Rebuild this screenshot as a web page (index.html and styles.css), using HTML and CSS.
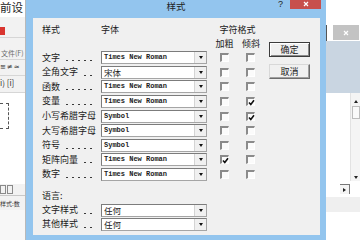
FILE: index.html
```html
<!DOCTYPE html>
<html lang="zh-CN">
   <head>
      <meta charset="UTF-8" />
      <title>样式</title>
      <link rel="stylesheet" href="styles.css">
   </head>
   <body>
      <div class="screen">
         <div class="bg-left">
            <div class="bl-title">前设</div>
            <div class="bl-tool"><span class="red-icon"></span></div>
            <div class="bl-menu">文件(F)</div>
            <div class="bl-sym">≅≠≈</div>
            <div class="bl-sym2">i) [i]</div>
            <div class="bl-doc"><div class="dash-box"></div></div>
            <div class="bl-btns"><span></span><span></span></div>
            <div class="bl-status">样式:数</div>
            <div class="bl-foot"></div>
         </div>

         <div class="dialog">
            <div class="titlebar">
               <span class="title">样式</span>
               <div class="controls">
                  <span class="help">?</span>
                  <span class="close"><svg viewBox="0 0 6 6"><path d="M1 1 L5 5 M5 1 L1 5" /></svg></span>
               </div>
            </div>
            <div class="client">
               <div class="form">
                  <div class="grid">
                     <div class="head">样式</div>
                     <div class="head">字体</div>
                     <div class="head span2">字符格式</div>
                     <div></div>
                     <div></div>
                     <div class="head center">加粗</div>
                     <div class="head">倾斜</div>

                     <div class="label">文字<span class="leader"></span></div>
                     <div class="select"><span class="value mono">Times New Roman</span><span class="arrow"></span></div>
                     <div class="cb bold-col"></div>
                     <div class="cb italic-col"></div>

                     <div class="label">全角文字<span class="leader"></span></div>
                     <div class="select"><span class="value">宋体</span><span class="arrow"></span></div>
                     <div class="cb bold-col"></div>
                     <div class="cb italic-col"></div>

                     <div class="label">函数<span class="leader"></span></div>
                     <div class="select"><span class="value mono">Times New Roman</span><span class="arrow"></span></div>
                     <div class="cb bold-col"></div>
                     <div class="cb italic-col"></div>

                     <div class="label">变量<span class="leader"></span></div>
                     <div class="select"><span class="value mono">Times New Roman</span><span class="arrow"></span></div>
                     <div class="cb bold-col"></div>
                     <div class="cb italic-col checked"><svg viewBox="0 0 7 7"><path d="M1 3.5 L2.8 5.5 L6 1.2" /></svg></div>

                     <div class="label">小写希腊字母<span class="leader"></span></div>
                     <div class="select"><span class="value mono">Symbol</span><span class="arrow"></span></div>
                     <div class="cb bold-col"></div>
                     <div class="cb italic-col checked"><svg viewBox="0 0 7 7"><path d="M1 3.5 L2.8 5.5 L6 1.2" /></svg></div>

                     <div class="label">大写希腊字母<span class="leader"></span></div>
                     <div class="select"><span class="value mono">Symbol</span><span class="arrow"></span></div>
                     <div class="cb bold-col"></div>
                     <div class="cb italic-col"></div>

                     <div class="label">符号<span class="leader"></span></div>
                     <div class="select"><span class="value mono">Symbol</span><span class="arrow"></span></div>
                     <div class="cb bold-col"></div>
                     <div class="cb italic-col"></div>

                     <div class="label">矩阵向量<span class="leader"></span></div>
                     <div class="select"><span class="value mono">Times New Roman</span><span class="arrow"></span></div>
                     <div class="cb bold-col checked"><svg viewBox="0 0 7 7"><path d="M1 3.5 L2.8 5.5 L6 1.2" /></svg></div>
                     <div class="cb italic-col"></div>

                     <div class="label">数字<span class="leader"></span></div>
                     <div class="select"><span class="value mono">Times New Roman</span><span class="arrow"></span></div>
                     <div class="cb bold-col"></div>
                     <div class="cb italic-col"></div>
                  </div>

                  <div class="lang">
                     <div class="head">语言:</div>
                     <div></div>
                     <div class="label">文字样式<span class="leader"></span></div>
                     <div class="select"><span class="value">任何</span><span class="arrow"></span></div>
                     <div class="label">其他样式<span class="leader"></span></div>
                     <div class="select"><span class="value">任何</span><span class="arrow"></span></div>
                  </div>
               </div>

               <div class="actions">
                  <button class="btn default">确定</button>
                  <button class="btn">取消</button>
               </div>
            </div>
         </div>

         <div class="bg-right">
            <div class="br-top"></div>
            <div class="br-tabrow"><span class="br-tab"><svg viewBox="0 0 6 6"><path d="M1 1 L5 5 M5 1 L1 5" /></svg></span></div>
            <div class="br-band"></div>
            <div class="br-view">
               <div class="br-page"></div>
               <div class="vscroll">
                  <span class="sb-up"></span>
                  <span class="sb-thumb"></span>
                  <span class="sb-fill"></span>
                  <span class="sb-down"></span>
               </div>
            </div>
            <div class="br-hscroll"><span class="sb-left"></span></div>
            <div class="br-status"></div>
            <div class="br-foot"></div>
         </div>
      </div>
   </body>
</html>
```

FILE: styles.css
```css
body {
margin: 0;
padding: 0;
background-color: #ffffff;
font-family: "Noto Sans CJK SC", "Noto Sans", sans-serif;
color: #1a1a1a;
overflow: hidden;
}
.screen {
width: 360px;
height: 240px;
display: flex;
overflow: hidden;
}

/* left background window */
.bg-left {
width: 25px;
border-right: 1px solid #b9b9b9;
display: flex;
flex-direction: column;
overflow: hidden;
background-color: #ffffff;
}
.bl-title {
height: 17px;
font-size: 11.5px;
line-height: 14px;
white-space: nowrap;
color: #222;
}
.bl-tool {
height: 20px;
background-color: #f2f2f2;
border-bottom: 1px solid #d6d6d6;
}
.red-icon {
display: block;
width: 5px;
height: 8px;
margin-top: 10px;
background-color: #d9352f;
}
.bl-menu {
height: 22px;
background-color: #f2f2f2;
border-bottom: 1px solid #d6d6d6;
font-size: 7px;
line-height: 8px;
padding: 11px 0 0 1px;
box-sizing: border-box;
color: #6d6d6d;
white-space: nowrap;
}
.bl-sym {
height: 15px;
background-color: #f2f2f2;
border-bottom: 1px solid #d6d6d6;
font-family: "DejaVu Sans", sans-serif;
font-size: 7px;
line-height: 14px;
letter-spacing: 1px;
white-space: nowrap;
color: #333;
}
.bl-sym2 {
height: 16px;
background-color: #f2f2f2;
border-bottom: 1px solid #d6d6d6;
font-size: 8px;
line-height: 14px;
white-space: nowrap;
color: #333;
}
.bl-doc {
flex: 1;
background-color: #ffffff;
}
.dash-box {
width: 8px;
height: 24px;
margin-top: 10px;
border: 1px dashed #555;
border-left: none;
}
.bl-btns {
height: 12px;
display: flex;
gap: 1px;
background-color: #f2f2f2;
border-bottom: 1px solid #c8c8c8;
padding-top: 1px;
box-sizing: border-box;
}
.bl-btns span {
width: 6px;
height: 9px;
border: 1px solid #8a8a8a;
box-sizing: border-box;
}
.bl-status {
height: 14px;
background-color: #f2f2f2;
font-size: 6px;
line-height: 12px;
white-space: nowrap;
color: #333;
padding-top: 2px;
box-sizing: border-box;
}
.bl-foot {
height: 30px;
background-color: #f7f7f7;
}

/* dialog */
.dialog {
width: 300px;
flex: none;
background-color: #93c5ee;
display: flex;
flex-direction: column;
}
.titlebar {
height: 18px;
display: grid;
grid-template-columns: 1fr;
}
.title {
grid-area: 1 / 1;
justify-self: center;
font-size: 9.5px;
line-height: 13px;
color: #1e1e1e;
}
.controls {
grid-area: 1 / 1;
justify-self: end;
align-self: start;
display: flex;
align-items: flex-start;
gap: 7px;
margin-right: 5px;
}
.help {
font-family: "Liberation Sans", Arial, sans-serif;
font-size: 9px;
line-height: 9px;
color: #222;
}
.close {
width: 31px;
height: 9px;
background-color: #c7504c;
display: flex;
justify-content: center;
align-items: flex-start;
padding-top: 1px;
box-sizing: border-box;
}
.close svg, .br-tab svg {
width: 6px;
height: 6px;
}
.close svg path, .br-tab svg path {
stroke: #ffffff;
stroke-width: 1.2;
}
.client {
flex: 1;
margin: 0 6px 5px 7px;
background-color: #f0f0f0;
display: flex;
padding: 6px 0 0 9px;
box-sizing: border-box;
}
.form {
width: 226px;
}
.grid {
display: grid;
grid-template-columns: 59px 106px 35px 26px;
grid-template-rows: 12px 12px repeat(9, 13px);
row-gap: 1.6px;
align-items: center;
}
.head {
font-size: 9px;
line-height: 12px;
white-space: nowrap;
}
.span2 {
grid-column: span 2;
justify-self: center;
}
.center {
justify-self: center;
}
.label {
display: flex;
align-items: center;
font-size: 9px;
line-height: 12px;
white-space: nowrap;
}
.leader {
flex: 1;
min-width: 0;
height: 3px;
margin: 6px 5px 0 4px;
background-image: radial-gradient(circle, #3a3a3a 0.6px, transparent 0.9px);
background-size: 6px 3px;
background-repeat: repeat-x;
}
.select {
height: 13px;
display: flex;
align-items: stretch;
background-color: #ffffff;
border: 1px solid #a5a5a5;
border-top-color: #7c7c7c;
border-left-color: #7c7c7c;
box-sizing: border-box;
}
.value {
flex: 1;
padding-left: 2px;
font-size: 8.5px;
line-height: 11px;
white-space: nowrap;
overflow: hidden;
}
.value.mono {
font-family: "Liberation Mono", "Courier New", monospace;
font-size: 7px;
font-weight: bold;
color: #222;
}
.arrow {
width: 11px;
background-color: #f0f0f0;
border-left: 1px solid #d4d4d4;
display: flex;
align-items: center;
justify-content: center;
}
.arrow::after {
content: "";
width: 0;
height: 0;
border-left: 2.5px solid transparent;
border-right: 2.5px solid transparent;
border-top: 3px solid #111;
}
.cb {
width: 9px;
height: 9px;
box-sizing: border-box;
border-top: 2px solid #8b8b8b;
border-left: 2px solid #8b8b8b;
border-right: 1px solid #ffffff;
border-bottom: 1px solid #ffffff;
background-color: #fbfbfb;
}
.bold-col {
justify-self: start;
margin-left: 13px;
}
.italic-col {
justify-self: start;
margin-left: 4px;
}
.cb svg {
display: block;
width: 7px;
height: 7px;
}
.cb svg path {
fill: none;
stroke: #111;
stroke-width: 1.6;
}
.lang {
display: grid;
grid-template-columns: 59px 106px;
grid-template-rows: 14px 13px 13px;
row-gap: 1px;
align-items: center;
margin-top: 8px;
}
.actions {
display: flex;
flex-direction: column;
gap: 7px;
margin: 18px 0 0 1px;
}
.btn {
width: 41px;
height: 15px;
padding: 0;
font-family: "Noto Sans CJK SC", sans-serif;
font-size: 9px;
line-height: 12px;
color: #1a1a1a;
background-color: #f0f0f0;
border: 1px solid #6c6c6c;
border-top-color: #d8d8d8;
border-left-color: #d8d8d8;
box-shadow: inset -1px -1px 0 #a0a0a0;
}
.btn.default {
border: 1px solid #3c3c3c;
box-shadow: inset 1px 1px 0 #ffffff, inset -1px -1px 0 #8a8a8a;
}

/* right background window */
.bg-right {
flex: 1;
display: flex;
flex-direction: column;
background-color: #ffffff;
}
.br-top {
height: 25px;
}
.br-tabrow {
height: 16px;
padding-left: 6px;
border-left: 1px solid #555;
box-sizing: border-box;
}
.br-tab {
display: flex;
align-items: center;
justify-content: center;
width: 26px;
height: 15px;
background-color: #c3c3c3;
}
.br-band {
height: 52px;
background-color: #c9d5e1;
}
.br-view {
height: 88px;
display: flex;
}
.br-page {
flex: 1;
}
.vscroll {
width: 10px;
display: flex;
flex-direction: column;
background-color: #f4f4f4;
border-left: 1px solid #e2e2e2;
box-sizing: border-box;
}
.sb-up, .sb-down {
height: 8px;
display: flex;
align-items: center;
justify-content: center;
}
.sb-up::after {
content: "";
border-left: 2px solid transparent;
border-right: 2px solid transparent;
border-bottom: 3px solid #222;
}
.sb-down::after {
content: "";
border-left: 2px solid transparent;
border-right: 2px solid transparent;
border-top: 3px solid #222;
}
.sb-up {
margin-top: 4px;
}
.sb-thumb {
height: 11px;
margin: 1px 0 0 1px;
border: 1px solid #bdbdbd;
background-color: #fafafa;
}
.sb-fill {
flex: 1;
}
.br-hscroll {
height: 16px;
padding: 3px 0 0 14px;
box-sizing: border-box;
}
.sb-left {
display: flex;
align-items: center;
justify-content: center;
width: 10px;
height: 10px;
border-right: 1px solid #777;
border-top: 1px solid #777;
box-sizing: border-box;
background-color: #f4f4f4;
}
.sb-left::after {
content: "";
border-top: 2px solid transparent;
border-bottom: 2px solid transparent;
border-left: 3px solid #222;
}
.br-status {
height: 15px;
background-color: #efefef;
}
.br-foot {
flex: 1;
}
```
